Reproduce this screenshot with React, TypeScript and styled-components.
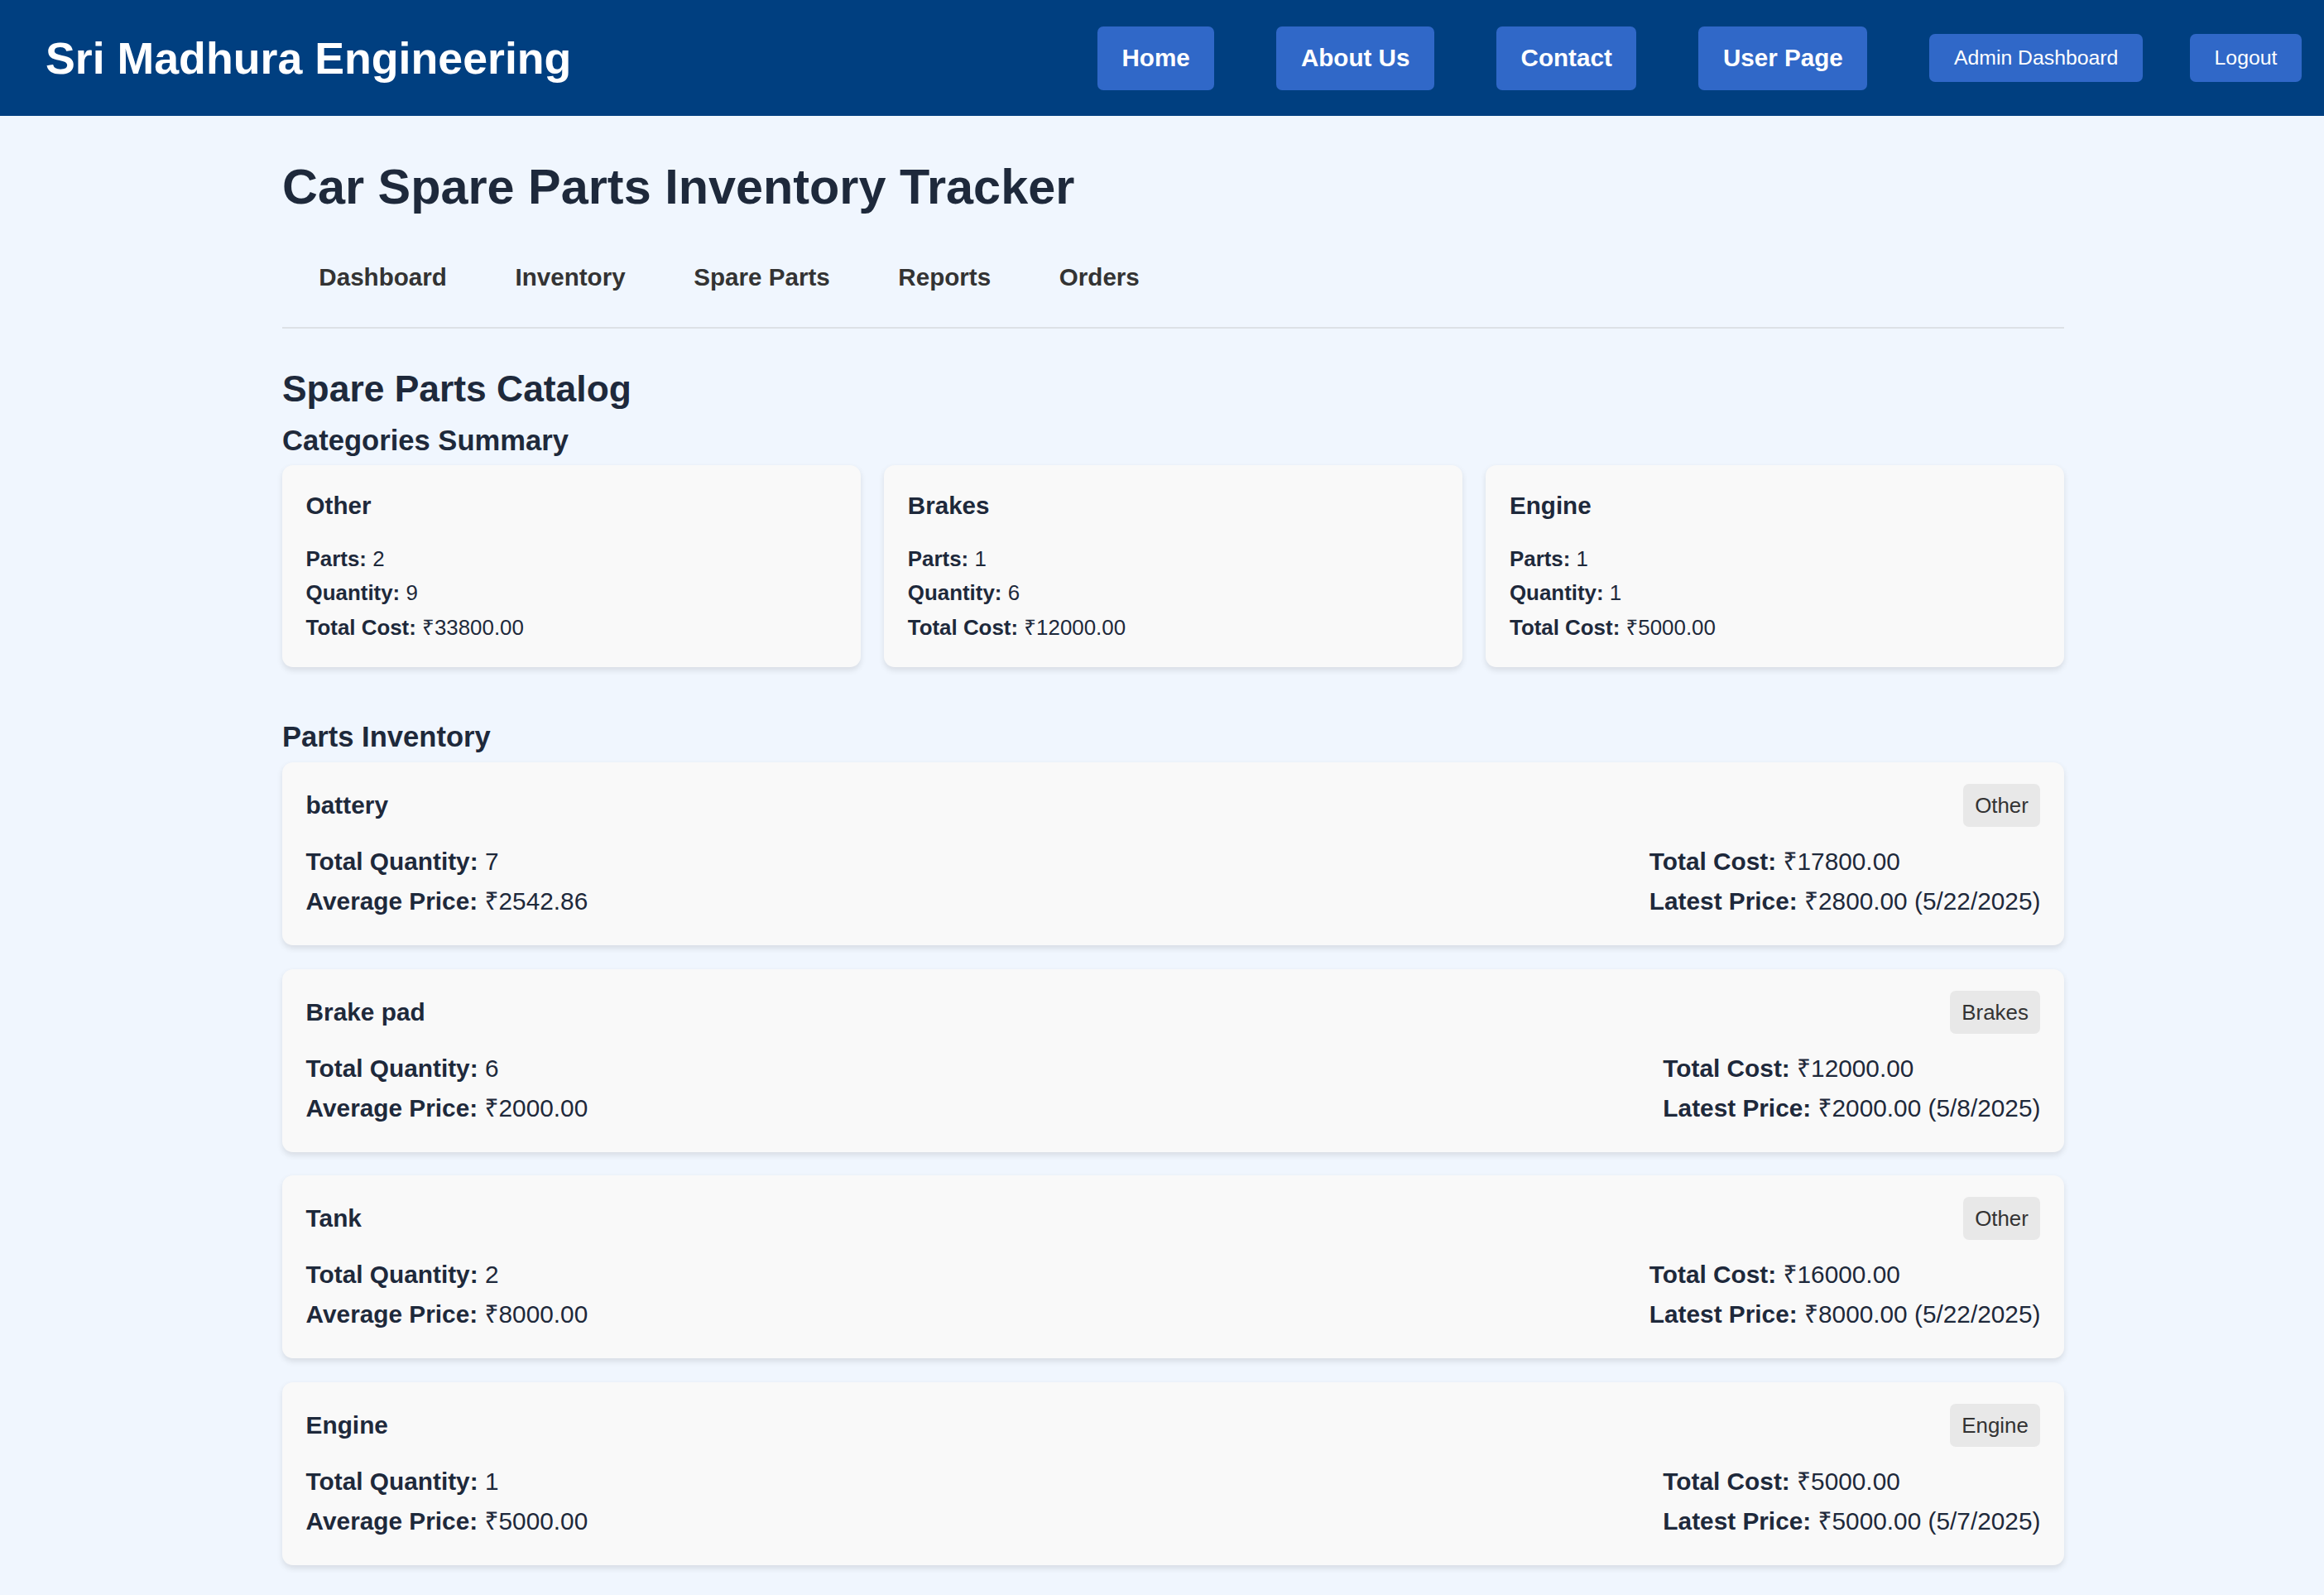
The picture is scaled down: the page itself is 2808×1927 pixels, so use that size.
import React from "react";
import styled, { createGlobalStyle } from "styled-components";

const GlobalStyle = createGlobalStyle`
  html, body {
    margin: 0;
    padding: 0;
    background: #f0f6fe;
  }
  body {
    font-family: "Liberation Sans", "Noto Sans", Arial, sans-serif;
    color: #1e293b;
  }
  * { box-sizing: border-box; }
`;

const Header = styled.header`
  height: 140px;
  background: #003f80;
  display: flex;
  align-items: center;
  justify-content: space-between;
  padding: 0 27px 0 55px;
`;

const Brand = styled.h1`
  margin: 0;
  color: #ffffff;
  font-size: 53.7px;
  font-weight: 700;
  line-height: 62px;
`;

const NavBar = styled.nav`
  display: flex;
  align-items: center;
  gap: 75px;
`;

const AuthGroup = styled.div`
  display: flex;
  align-items: center;
  gap: 57px;
`;

const NavButton = styled.a<{ $small?: boolean }>`
  display: inline-block;
  background: #3068c8;
  color: #ffffff;
  border-radius: 7px;
  text-decoration: none;
  font-size: ${(p) => (p.$small ? "24.8px" : "29.6px")};
  font-weight: ${(p) => (p.$small ? 400 : 700)};
  line-height: ${(p) => (p.$small ? "28.5px" : "34px")};
  padding: ${(p) => (p.$small ? "14.8px 29.6px" : "21.5px 29.6px")};
  white-space: nowrap;
`;

const Main = styled.main`
  padding: 0 0 60px 27px;
`;

const Container = styled.div`
  width: 2153px;
  margin: 0 auto;
`;

const PageTitle = styled.h1`
  margin: 52px 0 0;
  font-size: 59.4px;
  line-height: 68px;
  font-weight: 700;
  color: #1e293b;
`;

const Tabs = styled.div`
  display: flex;
  margin-top: 33px;
  padding: 0 0 18px 3px;
  border-bottom: 2px solid #dde1e6;
`;

const Tab = styled.button`
  background: none;
  border: none;
  font-family: inherit;
  font-size: 29.6px;
  font-weight: 700;
  line-height: 34px;
  color: #333333;
  padding: 25px 41.3px;
  cursor: pointer;
`;

const SectionTitle = styled.h2`
  margin: 46.5px 0 0;
  font-size: 44.4px;
  line-height: 51px;
  font-weight: 700;
  color: #1e293b;
`;

const SubTitle = styled.h3<{ $top: number }>`
  margin: ${(p) => p.$top}px 0 0;
  font-size: 34.6px;
  line-height: 40px;
  font-weight: 700;
  color: #1e293b;
`;

const CategoryGrid = styled.div`
  display: grid;
  grid-template-columns: repeat(3, 1fr);
  gap: 28.6px;
  margin-top: 10px;
`;

const Card = styled.div`
  background: #f9f9f9;
  border-radius: 13px;
  box-shadow: 0 3.7px 7.4px rgba(0, 0, 0, 0.1);
`;

const CategoryCard = styled(Card)`
  padding: 28.6px 28.6px 33px;
  display: flex;
  flex-direction: column;
`;

const CardTitle = styled.h4`
  margin: 3.4px 0 32px;
  font-size: 29.6px;
  line-height: 34px;
  font-weight: 700;
  color: #1e293b;
`;

const StatList = styled.div<{ $gap: number }>`
  display: flex;
  flex-direction: column;
  gap: ${(p) => p.$gap}px;
`;

const Stat = styled.p<{ $size: number; $lh: number }>`
  margin: 0;
  font-size: ${(p) => p.$size}px;
  line-height: ${(p) => p.$lh}px;
  color: #1e293b;
  white-space: nowrap;
  strong { font-weight: 700; }
`;

const PartList = styled.div`
  display: flex;
  flex-direction: column;
  gap: 28.6px;
  margin-top: 11px;
`;

const PartCard = styled(Card)`
  padding: 26px 28.6px 36px;
`;

const PartHeader = styled.div`
  display: flex;
  align-items: center;
  justify-content: space-between;
  height: 52px;
`;

const PartName = styled.h4`
  margin: 0;
  font-size: 29.8px;
  line-height: 34px;
  font-weight: 700;
  color: #1e293b;
`;

const Badge = styled.span`
  background: #e8e8e8;
  color: #333333;
  border-radius: 7px;
  font-size: 25.9px;
  line-height: 30px;
  padding: 11px 14.5px;
`;

const PartBody = styled.div`
  display: flex;
  justify-content: space-between;
  margin-top: 25px;
`;

const categories = [
  { name: "Other", parts: 2, quantity: 9, cost: "33800.00" },
  { name: "Brakes", parts: 1, quantity: 6, cost: "12000.00" },
  { name: "Engine", parts: 1, quantity: 1, cost: "5000.00" },
];

const parts = [
  { name: "battery", category: "Other", qty: 7, avg: "2542.86", total: "17800.00", latest: "2800.00", date: "5/22/2025" },
  { name: "Brake pad", category: "Brakes", qty: 6, avg: "2000.00", total: "12000.00", latest: "2000.00", date: "5/8/2025" },
  { name: "Tank", category: "Other", qty: 2, avg: "8000.00", total: "16000.00", latest: "8000.00", date: "5/22/2025" },
  { name: "Engine", category: "Engine", qty: 1, avg: "5000.00", total: "5000.00", latest: "5000.00", date: "5/7/2025" },
];

export default function App() {
  return (
    <>
      <GlobalStyle />
      <Header>
        <Brand>Sri Madhura Engineering</Brand>
        <NavBar>
          <NavButton href="#">Home</NavButton>
          <NavButton href="#">About Us</NavButton>
          <NavButton href="#">Contact</NavButton>
          <NavButton href="#">User Page</NavButton>
          <AuthGroup>
            <NavButton $small href="#">Admin Dashboard</NavButton>
            <NavButton $small href="#">Logout</NavButton>
          </AuthGroup>
        </NavBar>
      </Header>
      <Main>
        <Container>
          <PageTitle>Car Spare Parts Inventory Tracker</PageTitle>
          <Tabs>
            {["Dashboard", "Inventory", "Spare Parts", "Reports", "Orders"].map((t) => (
              <Tab key={t}>{t}</Tab>
            ))}
          </Tabs>
          <SectionTitle>Spare Parts Catalog</SectionTitle>
          <SubTitle $top={17.5}>Categories Summary</SubTitle>
          <CategoryGrid>
            {categories.map((c) => (
              <CategoryCard key={c.name}>
                <CardTitle>{c.name}</CardTitle>
                <StatList $gap={11.5}>
                  <Stat $size={25.9} $lh={30}><strong>Parts:</strong> {c.parts}</Stat>
                  <Stat $size={25.9} $lh={30}><strong>Quantity:</strong> {c.quantity}</Stat>
                  <Stat $size={25.9} $lh={30}><strong>Total Cost:</strong> ₹{c.cost}</Stat>
                </StatList>
              </CategoryCard>
            ))}
          </CategoryGrid>
          <SubTitle $top={64}>Parts Inventory</SubTitle>
          <PartList>
            {parts.map((p) => (
              <PartCard key={p.name}>
                <PartHeader>
                  <PartName>{p.name}</PartName>
                  <Badge>{p.category}</Badge>
                </PartHeader>
                <PartBody>
                  <StatList $gap={14}>
                    <Stat $size={29.8} $lh={34}><strong>Total Quantity:</strong> {p.qty}</Stat>
                    <Stat $size={29.8} $lh={34}><strong>Average Price:</strong> ₹{p.avg}</Stat>
                  </StatList>
                  <StatList $gap={14}>
                    <Stat $size={29.8} $lh={34}><strong>Total Cost:</strong> ₹{p.total}</Stat>
                    <Stat $size={29.8} $lh={34}><strong>Latest Price:</strong> ₹{p.latest} ({p.date})</Stat>
                  </StatList>
                </PartBody>
              </PartCard>
            ))}
          </PartList>
        </Container>
      </Main>
    </>
  );
}
